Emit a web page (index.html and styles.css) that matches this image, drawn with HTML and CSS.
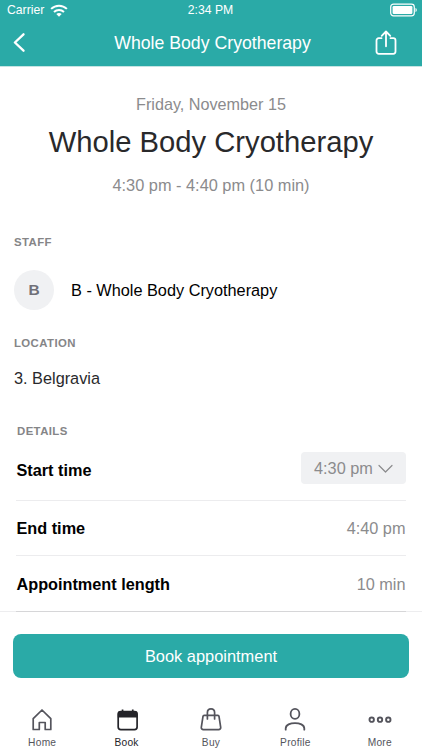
FILE: index.html
```html
<!DOCTYPE html>
<html lang="en">
<head>
<meta charset="utf-8">
<title>Whole Body Cryotherapy</title>
<link rel="stylesheet" href="styles.css">
</head>
<body>
<div class="screen">
  <header class="header">
    <div class="status">
      <div class="carrier"><span>Carrier</span>
        <svg class="wifi" width="18" height="13" viewBox="0 0 18 13" fill="none" stroke="#fff" stroke-width="2"><path d="M1.1 4.9C5.6.6 12.4.6 16.9 4.9"/><path d="M4 7.9c2.9-2.7 7.100-2.700 10 0"/><path d="M6.300 10.100c1.500-1.500 3.900-1.500 5.400 0L9 12.700z" fill="#fff" stroke="none"/></svg>
      </div>
      <span>2:34 PM</span>
      <svg class="battery" width="28" height="14" viewBox="0 0 28 14" fill="none"><rect x=".7" y="1.200" width="23.600" height="11.600" rx="2.800" stroke="#fff" stroke-width="1.200"/><rect x="2.600" y="3.100" width="19.800" height="7.800" rx="1.200" fill="#fff"/><path d="M25.500 5c1.700.5 1.700 3.500 0 4z" fill="#fff"/></svg>
    </div>
    <div class="nav">
      <svg class="back" width="14" height="20" viewBox="0 0 14 20" fill="none" stroke="#fff" stroke-width="2.300" stroke-linecap="round" stroke-linejoin="round"><path d="M11.500 1.300 2.900 9.500l8.600 8.200"/></svg>
      <span>Whole Body Cryotherapy</span>
      <svg class="share" width="22" height="26" viewBox="0 0 22 26" fill="none" stroke="#fff" stroke-width="1.800" stroke-linecap="round" stroke-linejoin="round"><path d="M6.500 8.200H3.700a2.200 2.200 0 0 0-2.200 2.200v11.200a2.200 2.200 0 0 0 2.200 2.200h14.600a2.200 2.200 0 0 0 2.200-2.200V10.400a2.200 2.200 0 0 0-2.200-2.200h-2.800M11 16.300V2M6.700 5.900 11 1.500l4.300 4.400"/></svg>
    </div>
  </header>
  <main class="content">
    <section class="summary">
      <p class="date">Friday, November 15</p>
      <h1 class="title">Whole Body Cryotherapy</h1>
      <p class="slot">4:30 pm - 4:40 pm (10 min)</p>
    </section>
    <section class="staff">
      <h2 class="label">STAFF</h2>
      <div class="person"><span class="avatar">B</span><span class="name">B - Whole Body Cryotherapy</span></div>
    </section>
    <section class="location">
      <h2 class="label">LOCATION</h2>
      <p class="place">3. Belgravia</p>
    </section>
    <section class="details">
      <h2 class="label">DETAILS</h2>
      <div class="row row-start"><span class="key">Start time</span>
        <button class="picker"><span>4:30 pm</span><svg width="15" height="9" viewBox="0 0 15 9" fill="none" stroke="#8b8b8d" stroke-width="1.200" stroke-linecap="round" stroke-linejoin="round"><path d="M1 1.500l6.500 6.500L14 1.500"/></svg></button>
      </div>
      <div class="row"><span class="key">End time</span><span class="value">4:40 pm</span></div>
      <div class="row row-last"><span class="key">Appointment length</span><span class="value">10 min</span></div>
    </section>
  </main>
  <footer class="footer">
    <button class="book">Book appointment</button>
    <nav class="tabs">
      <a class="tab"><svg width="24" height="26" viewBox="0 0 24 26" fill="none" stroke="#54545c" stroke-width="1.700" stroke-linejoin="round"><path d="M3.200 11.700 12 3l8.800 8.700v10.800h-5.600v-7H9.300v7H3.200z"/></svg><span>Home</span></a>
      <a class="tab active"><svg width="24" height="26" viewBox="0 0 24 26" fill="none"><rect x="3.200" y="4.700" width="18.900" height="18" rx="2.600" stroke="#242429" stroke-width="1.700"/><path d="M2.800 10.500V6.800a2.600 2.600 0 0 1 2.600-2.600h14.500a2.600 2.600 0 0 1 2.600 2.600v3.700zM6.700 2.500h1.700v2H6.700zM16.900 2.500h1.700v2h-1.700z" fill="#242429"/></svg><span>Book</span></a>
      <a class="tab"><svg width="24" height="26" viewBox="0 0 24 26" fill="none" stroke="#54545c" stroke-width="1.700" stroke-linecap="round" stroke-linejoin="round"><path d="M5.200 8.300h13.600a1.200 1.200 0 0 1 1.200 1l1.700 11a2 2 0 0 1-2 2.300H4.300a2 2 0 0 1-2-2.300l1.700-11a1.200 1.200 0 0 1 1.200-1zM8.400 12V5.600C8.400.6 15.600.6 15.600 5.600V12"/></svg><span>Buy</span></a>
      <a class="tab"><svg width="24" height="26" viewBox="0 0 24 26" fill="none" stroke="#54545c" stroke-width="1.800" stroke-linecap="round"><ellipse cx="12" cy="6.900" rx="4.400" ry="5"/><path d="M2.700 22.700v-1.200c0-7.300 18.600-7.300 18.600 0v1.200"/></svg><span>Profile</span></a>
      <a class="tab"><svg width="24" height="26" viewBox="0 0 24 26" fill="none" stroke="#54545c" stroke-width="1.900"><circle cx="3.700" cy="12.700" r="2.200"/><circle cx="12" cy="12.700" r="2.200"/><circle cx="20.300" cy="12.700" r="2.200"/></svg><span>More</span></a>
    </nav>
  </footer>
</div>
</body>
</html>
```
FILE: styles.css
```css
* { box-sizing: border-box; }
body, h1, h2, p { margin: 0; font-weight: normal; }
body { background: #fff; font-family: "Liberation Sans", Arial, sans-serif; font-size: 16.3px; }
svg { display: block; flex: none; }
button { border: 0; font: inherit; }
.screen { width: 422px; height: 750px; overflow: hidden; display: flex; flex-direction: column; }
.header { height: 66px; flex: none; background: #2aaaa7; color: #fff; box-shadow: 0 1px 0 #c5e4e3; }
.status { height: 20px; padding: 0 4px 0 7px; display: grid; grid-template-columns: 1fr auto 1fr; align-items: center; font-size: 12.2px; line-height: 20px; }
.status > span { margin: 0 2px 0 -2px; }
.carrier { display: flex; align-items: center; gap: 6px; }
.battery { justify-self: end; }
.nav { height: 46px; padding: 0 25px 0 12px; display: grid; grid-template-columns: 38px 1fr 22px; align-items: center; text-align: center; font-size: 17.7px; line-height: 46px; }
.content { flex: none; height: 545px; padding: 27px 14px 0; }
.summary { text-align: center; }
.date, .slot { color: #8b8b8d; line-height: 22px; }
.date { font-size: 16.2px; }
.title { color: #29292b; font-size: 29.2px; line-height: 40px; margin-top: 7px; }
.slot { margin-top: 12px; font-size: 16.35px; }
.label { color: #858587; font-size: 11.4px; font-weight: bold; line-height: 14px; letter-spacing: .4px; }
.staff { margin-top: 39px; }
.person { display: flex; align-items: center; gap: 17px; margin-top: 21px; }
.avatar { width: 40px; height: 40px; border-radius: 50%; background: #f0f1f3; color: #707078; text-align: center; font-weight: bold; font-size: 15.5px; line-height: 40px; }
.name { color: #000; font-size: 16.3px; line-height: 22px; }
.location { margin-top: 26px; }
.place { color: #29292b; margin-top: 17px; line-height: 22px; }
.details { margin: 35px 2px 0; }
.details .label { padding-left: 1px; }
.row { height: 55px; padding-top: 1px; display: flex; align-items: center; justify-content: space-between; border-bottom: 1px solid #ececee; }
.row-start { height: 63px; padding-top: 2px; }
.row-last { height: 56px; border-bottom-color: #d6d6d8; position: relative; z-index: 1; }
.key { color: #000; font-weight: bold; font-size: 16.25px; padding-left: .5px; }
.value { color: #8b8b8d; padding-right: .5px; }
.picker { width: 105px; height: 32px; margin-bottom: 4px; padding: 1px 13px 0; display: flex; align-items: center; justify-content: space-between; border-radius: 4px; background: #f0f1f3; color: #8b8b8d; }
.footer { flex: 1; border-top: 1px solid #ededef; padding-top: 22px; }
.book { display: block; width: 396px; height: 44px; margin: 0 13px; border-radius: 8px; background: #2aaaa7; color: #fff; font-size: 16.4px; line-height: 44px; padding: 0; }
.tabs { display: flex; margin-top: 29px; }
.tab { flex: 1; display: flex; flex-direction: column; align-items: center; gap: 3px; color: #54545c; font-size: 10.2px; line-height: 14px; letter-spacing: .25px; }
.active { color: #242429; }
```
